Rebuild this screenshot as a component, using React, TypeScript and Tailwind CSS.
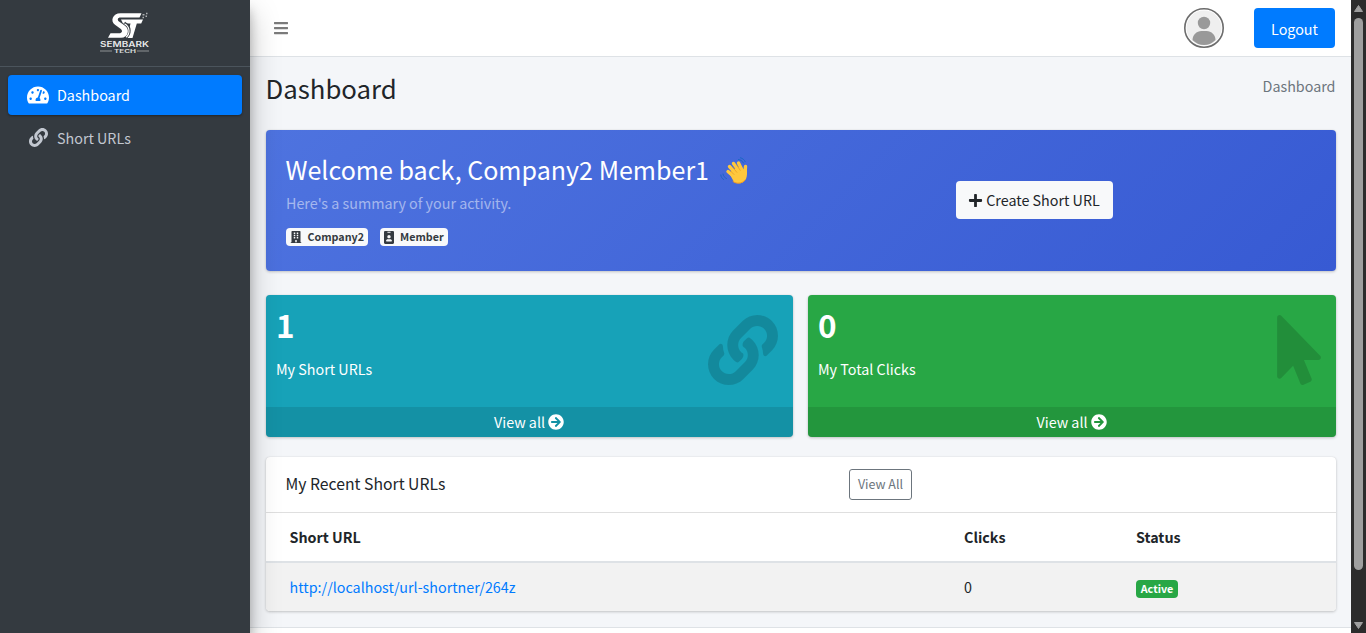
import type { ReactNode } from 'react'
import { FaArrowCircleRight, FaBars, FaBuilding, FaIdBadge, FaLink, FaMousePointer, FaPlus, FaTachometerAlt } from 'react-icons/fa'

const NAV = [
  { label: 'Dashboard', icon: <FaTachometerAlt size={22} className="-mt-px" />, active: true },
  { label: 'Short URLs', icon: <FaLink size={19} className="-mt-[2px]" />, active: false },
]

const URLS = [
  { url: 'http://localhost/url-shortner/264z', clicks: 0, status: 'Active' },
]

function Logo() {
  return (
    <svg width="52" height="42" viewBox="0 0 52 42" fill="#fff">
      <path d="M22 7.400h22l-1.800 4.200h-4.400L33.500 26H28l3.500-14.400H24z" />
      <path d="M25 11.600c6 3.500 6 10 1 13.800" fill="none" stroke="#343a40" strokeWidth="4" />
      <path d="M42.500 1.200H21.500c-8 0-10.500 8-5.500 11.500l5.500 4c2.500 2 1.800 4.500-1.500 4.500h-8.500L9 25.800h13c7.500 0 9-8.500 4-12l-6-4.200c-2-1.500-1.500-4 1.500-4h19z" />
      <path d="M25.500 11.700c5.500 3 6 10 1.500 13.500" fill="none" stroke="#fff" strokeWidth="1.200" />
      <path d="M43.500 2h2v1.500h-2zM46.500 3.500h1.500V5h-1.500zM43.500 4.800h1.500v1.500h-1.500zM47 .8h1.500v1.500H47z" opacity=".6" />
      <text x="1" y="35" textLength="49" lengthAdjust="spacingAndGlyphs" fontFamily="Inter, sans-serif" fontWeight="600" fontSize="7" fillOpacity=".9">SEMBARK</text>
      <text x="15" y="41" textLength="22" lengthAdjust="spacingAndGlyphs" fontFamily="Inter, sans-serif" fontWeight="700" fontSize="4.800" fillOpacity=".8">TECH</text>
      <path d="M1 38.600h12v1H1zM38 38.600h12v1H38z" opacity=".45" />
    </svg>
  )
}

function WavingHand() {
  return (
    <svg width="28" height="28" viewBox="0 0 28 28" fill="none" strokeLinecap="round" strokeLinejoin="round" className="mt-[3px]">
      <path d="M8 14.500l7 6M9.500 9.500l8 9M13.500 6.500l6.500 9M18.500 6l4 8M25.500 9.500L25 17" stroke="#ffc83d" strokeWidth="3.400" />
      <path d="M9 16l8-6 5 1 2 3 3-1c0 5 0 8-2 10.500-3 3.500-8 3.500-11 1.500z" fill="#ffc83d" />
      <path d="M10.500 14l3.500 3.500M12.800 10.300l4 5M17 8.500l3.200 4.800" stroke="#e8981c" strokeWidth=".7" />
      <path d="M13 24.500c3 2.500 9 2.500 12-1.500" stroke="#f59b23" strokeWidth="1" />
      <path d="M18.500 2.500c2 .2 4 1.500 5 3.500M20.500.8c2 .5 4 2 4.800 4M3 17c.3 2 1.500 3.500 3.500 4.500M.8 18c.2 2 1.200 3.500 2.800 4.500" stroke="#1967c4" strokeWidth="1" />
    </svg>
  )
}

function Sidebar() {
  return (
    <aside className="relative z-10 flex w-[250px] shrink-0 flex-col bg-[#343a40] shadow-[0_14px_28px_rgba(0,0,0,0.25),0_10px_10px_rgba(0,0,0,0.22)]">
      <div className="flex h-[67px] justify-center border-b border-[#4b545c] pt-3">
        <Logo />
      </div>
      <nav className="flex flex-col gap-[3px] p-2">
        {NAV.map((n) => (
          <a key={n.label} className={`flex h-10 items-center rounded pl-[17px] ${n.active ? 'bg-[#007bff] text-white shadow-[0_1px_3px_rgba(0,0,0,0.12),0_1px_2px_rgba(0,0,0,0.24)]' : 'text-[#c2c7d0]'}`}>
            <span className="flex w-[26px] justify-center">{n.icon}</span>
            <span className="ml-[6px]">{n.label}</span>
          </a>
        ))}
      </nav>
    </aside>
  )
}

function Header() {
  return (
    <header className="flex h-[57px] shrink-0 items-center justify-between border-b border-[#dee2e6] bg-white pr-4 pl-[23px]">
      <FaBars size={16} className="text-[#7b7b7b]" />
      <div className="flex items-center gap-[30px]">
        <svg width="40" height="40" viewBox="0 0 40 40">
          <circle cx="20" cy="20" r="19.200" fill="#fff" stroke="#6c6c6c" strokeWidth="1.600" />
          <circle cx="20" cy="20" r="17.500" fill="#efefef" />
          <circle cx="20" cy="15" r="6.200" fill="#999" />
          <path d="M8.500 32c0-5 4-9 9-9h5c5 0 9 4 9 9-3 3-7 5-11.500 5s-8.500-2-11.500-5z" fill="#999" />
        </svg>
        <button className="h-10 w-[81px] rounded bg-[#007bff] pt-[2px] text-white">Logout</button>
      </div>
    </header>
  )
}

function Badge({ icon, children }: { icon: ReactNode; children: ReactNode }) {
  return (
    <span className="flex h-[18px] items-center gap-[5.500px] rounded bg-[#f8f9fa] px-[4px] text-[10.74px] font-bold text-[#343a40]">
      {icon}
      {children}
    </span>
  )
}

function StatBox({ value, label, color, icon }: { value: number; label: string; color: string; icon: ReactNode }) {
  return (
    <div className={`relative flex h-[142px] flex-col overflow-hidden rounded text-white shadow-[0_0_1px_rgba(0,0,0,0.13),0_1px_3px_rgba(0,0,0,0.2)] ${color}`}>
      <div className="flex-1 px-[10px] pt-2">
        <h3 className="text-[31.5px] leading-[42px] font-bold">{value}</h3>
        <p className="mt-3">{label}</p>
      </div>
      <span className="absolute top-5 right-[15px] text-black/15">{icon}</span>
      <div className="flex h-[30px] items-center justify-center gap-[3px] bg-black/10 pr-px">
        View all <FaArrowCircleRight size={16} />
      </div>
    </div>
  )
}

function RecentUrls() {
  return (
    <section className="mt-5 overflow-hidden rounded bg-white shadow-[0_0_1px_rgba(0,0,0,0.13),0_1px_3px_rgba(0,0,0,0.2)]">
      <div className="flex h-[56px] items-center border-b border-black/[0.125] pl-[19.5px]">
        <h3 className="w-[563.5px] pb-[2px] text-[15.75px]">My Recent Short URLs</h3>
        <button className="h-[31px] w-[63px] rounded-[3px] border border-[#6c757d] pb-px text-[12.53px] text-[#6c757d]">View All</button>
      </div>
      <table className="w-full table-fixed text-left">
        <thead>
          <tr className="h-[49px] border-b-2 border-[#dee2e6]">
            <th className="w-[686px] pl-[23.5px]">Short URL</th>
            <th className="w-[172px] pl-3">Clicks</th>
            <th className="pl-3">Status</th>
          </tr>
        </thead>
        <tbody>
          {URLS.map((u) => (
            <tr key={u.url} className="h-[49px] bg-[#f2f2f2]">
              <td className="pb-px pl-[23.5px] text-[#007bff]">{u.url}</td>
              <td className="pb-px pl-3">{u.clicks}</td>
              <td className="pl-3">
                <span className="mt-[3px] flex h-[18px] w-[42px] items-center justify-center rounded bg-[#28a745] text-[10.74px] font-bold text-white">{u.status}</span>
              </td>
            </tr>
          ))}
        </tbody>
      </table>
    </section>
  )
}

function Scrollbar() {
  return (
    <div className="flex w-[15px] shrink-0 flex-col items-center bg-[#2c2c2c]">
      <svg width="15" height="18" viewBox="0 0 15 18"><path d="M7.500 5.500l4 6h-8z" fill="#9f9f9f" stroke="#9f9f9f" strokeLinejoin="round" /></svg>
      <div className="h-[552px] w-[9px] rounded-full bg-[#9f9f9f]" />
      <div className="flex-1" />
      <svg width="15" height="15" viewBox="0 0 15 15"><path d="M7.500 10.500l4-6h-8z" fill="#9f9f9f" stroke="#9f9f9f" strokeLinejoin="round" /></svg>
    </div>
  )
}

export default function App() {
  return (
    <div className="flex h-[633px] w-[1366px] overflow-hidden bg-[#f4f6f9] font-['Noto_Sans_CJK_SC',sans-serif] text-[14.32px] leading-6 text-[#212529]">
      <Sidebar />
      <div className="flex min-w-0 flex-1 flex-col">
        <Header />
        <main className="h-[570px] shrink-0 pr-[15px] pl-4">
          <div className="flex h-[73px] justify-between pt-[14px]">
            <h1 className="-ml-[0.5px] text-[25.78px] leading-[34px]">Dashboard</h1>
            <span className="pt-[3px] pr-[0.5px] text-[#6c757d]">Dashboard</span>
          </div>

          <section className="flex h-[141px] rounded bg-linear-[135deg,#4e73df,#375ad3] px-5 text-white shadow-[0_0_1px_rgba(0,0,0,0.13),0_1px_3px_rgba(0,0,0,0.2)]">
            <div className="w-[670px] pt-[22px]">
              <h3 className="-ml-[0.5px] flex h-[34px] items-center gap-[10.5px] text-[25.06px] leading-[34px]">
                Welcome back, Company2 Member1 <WavingHand />
              </h3>
              <p className="mt-[5px] text-white/50">Here's a summary of your activity.</p>
              <div className="mt-[13px] flex gap-[11.5px]">
                <Badge icon={<FaBuilding size={12} />}>Company2</Badge>
                <Badge icon={<FaIdBadge className="mr-px h-[13px] w-[10px]" preserveAspectRatio="none" />}>Member</Badge>
              </div>
            </div>
            <button className="mt-[51px] flex h-[38px] w-[157px] items-center justify-center gap-[3px] rounded bg-[#f8f9fa] pr-px text-[#212529]">
              <FaPlus size={15} /> Create Short URL
            </button>
          </section>

          <div className="mt-6 grid grid-cols-[527px_528px] gap-[15px]">
            <StatBox value={1} label="My Short URLs" color="bg-[#17a2b8]" icon={<FaLink size={70} />} />
            <StatBox value={0} label="My Total Clicks" color="bg-[#28a745]" icon={<FaMousePointer className="h-[70px] w-[44px]" />} />
          </div>

          <RecentUrls />
        </main>
        <footer className="flex-1 border-t border-[#dee2e6] bg-white" />
      </div>
      <Scrollbar />
    </div>
  )
}
